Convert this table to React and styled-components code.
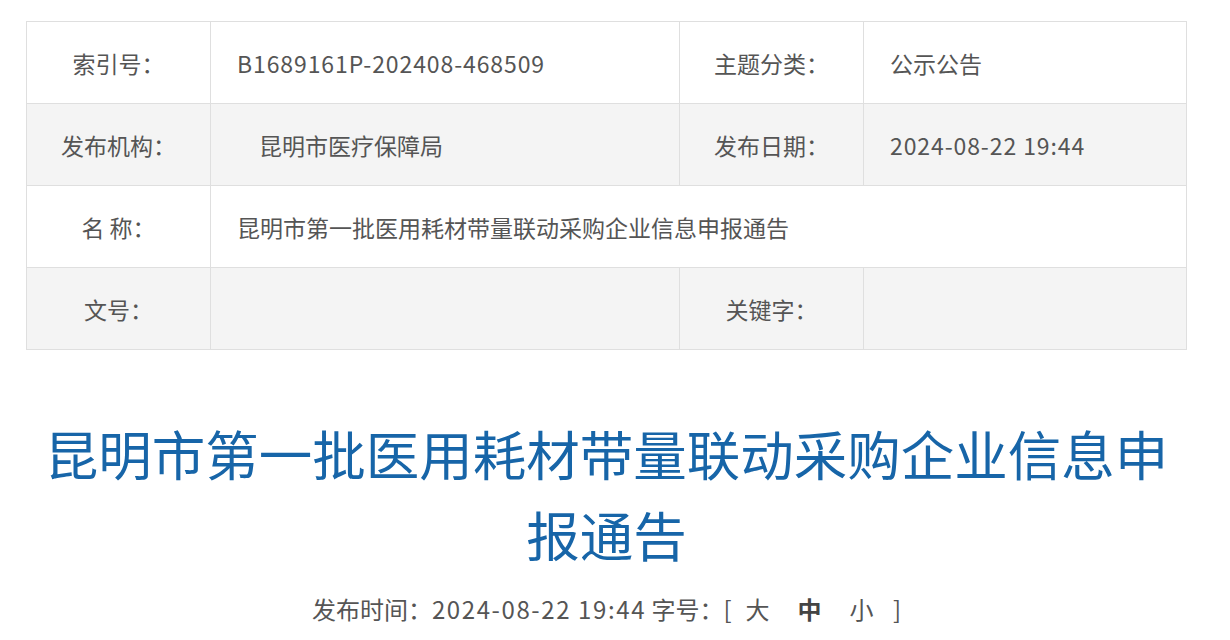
import React from "react";
import styled, { createGlobalStyle } from "styled-components";

const GlobalStyle = createGlobalStyle`
  body {
    margin: 0;
    background: #fff;
    font-family: "Noto Sans CJK SC", "Noto Sans", sans-serif;
    color: #555;
  }
`;

const rows = [
  [
    { label: "索引号：", value: "B1689161P-202408-468509", latin: true },
    { label: "主题分类：", value: "公示公告" },
  ],
  [
    { label: "发布机构：", value: "昆明市医疗保障局", indent: true },
    { label: "发布日期：", value: "2024-08-22 19:44", latin: true },
  ],
  [{ label: "名 称：", value: "昆明市第一批医用耗材带量联动采购企业信息申报通告", span: 3 }],
  [
    { label: "文号：", value: "" },
    { label: "关键字：", value: "" },
  ],
];

function App() {
  return (
    <Page>
      <GlobalStyle />
      <InfoTable>
        <colgroup>
          <col style={{ width: 184 }} />
          <col style={{ width: 469 }} />
          <col style={{ width: 184 }} />
          <col />
        </colgroup>
        <tbody>
          {rows.map((row, i) => (
            <Row key={i} $shaded={i % 2 === 1}>
              {row.map((cell) => (
                <React.Fragment key={cell.label}>
                  <Label>{cell.label}</Label>
                  <Value
                    colSpan={cell.span || 1}
                    $indent={cell.indent}
                    $latin={cell.latin}
                  >
                    {cell.value}
                  </Value>
                </React.Fragment>
              ))}
            </Row>
          ))}
        </tbody>
      </InfoTable>

      <Title>昆明市第一批医用耗材带量联动采购企业信息申报通告</Title>

      <Meta>
        发布时间：<Digits>2024-08-22 19:44</Digits> 字号：[
        <SizeLink>大</SizeLink>
        <SizeLink $active>中</SizeLink>
        <SizeLink>小</SizeLink> ]
      </Meta>
    </Page>
  );
}

export default App;

const Page = styled.div`
  width: 1161px;
  padding: 21px 0 0 26px;
`;

const InfoTable = styled.table`
  width: 100%;
  border-collapse: collapse;
  table-layout: fixed;
  font-size: 23px;
`;

const Row = styled.tr`
  height: 82px;
  background: ${(p) => (p.$shaded ? "#f4f4f4" : "#fff")};
`;

const Label = styled.td`
  border: 1px solid #dfdfdf;
  text-align: center;
  color: #555;
  padding: 0;
`;

const Value = styled.td`
  border: 1px solid #dfdfdf;
  color: #555;
  padding: 0 0 0 ${(p) => (p.$indent ? "48px" : "26px")};
  letter-spacing: ${(p) => (p.$latin ? "0.9px" : "0")};
`;

const Title = styled.h1`
  margin: 62px 0 0;
  font-size: 53.5px;
  line-height: 81px;
  font-weight: 400;
  color: #1765a8;
  text-align: center;
`;

const Meta = styled.div`
  margin-top: 17px;
  font-size: 24px;
  line-height: 36px;
  text-align: center;
  color: #555;
`;

const Digits = styled.span`
  letter-spacing: 1.6px;
`;

const SizeLink = styled.span`
  margin: 0 14px;
  font-weight: ${(p) => (p.$active ? 700 : 400)};
  color: ${(p) => (p.$active ? "#444" : "#555")};
`;
